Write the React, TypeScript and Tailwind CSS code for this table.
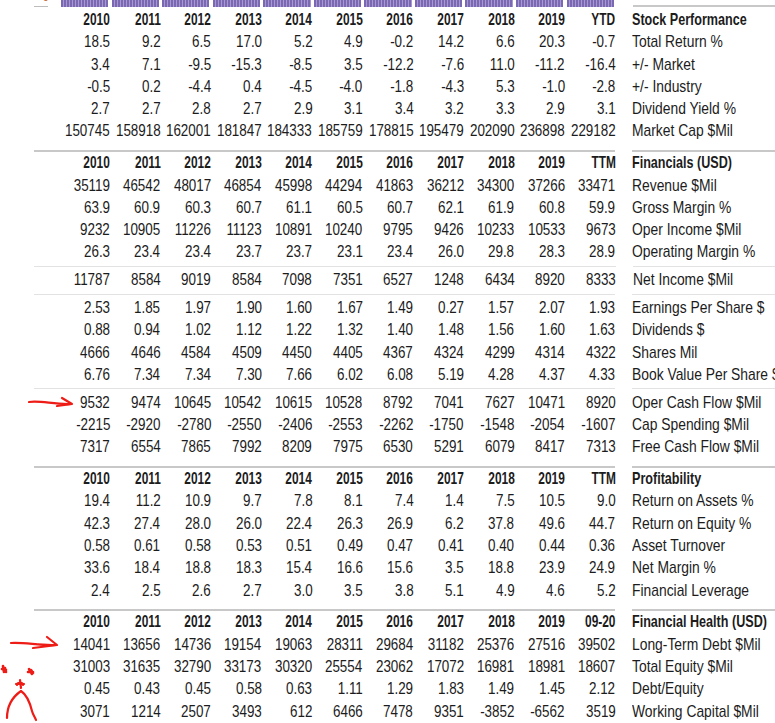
import React from "react";

type Group = { thick: boolean; header?: [string, string]; rows: [string, string[]][] };

const years = ["2010", "2011", "2012", "2013", "2014", "2015", "2016", "2017", "2018", "2019"];
const r = (s: string) => s.split(" ");

const groups: Group[] = [
  {
    thick: true,
    header: ["YTD", "Stock Performance"],
    rows: [
      ["Total Return %", r("18.5 9.2 6.5 17.0 5.2 4.9 -0.2 14.2 6.6 20.3 -0.7")],
      ["+/- Market", r("3.4 7.1 -9.5 -15.3 -8.5 3.5 -12.2 -7.6 11.0 -11.2 -16.4")],
      ["+/- Industry", r("-0.5 0.2 -4.4 0.4 -4.5 -4.0 -1.8 -4.3 5.3 -1.0 -2.8")],
      ["Dividend Yield %", r("2.7 2.7 2.8 2.7 2.9 3.1 3.4 3.2 3.3 2.9 3.1")],
      ["Market Cap $Mil", r("150745 158918 162001 181847 184333 185759 178815 195479 202090 236898 229182")],
    ],
  },
  {
    thick: true,
    header: ["TTM", "Financials (USD)"],
    rows: [
      ["Revenue $Mil", r("35119 46542 48017 46854 45998 44294 41863 36212 34300 37266 33471")],
      ["Gross Margin %", r("63.9 60.9 60.3 60.7 61.1 60.5 60.7 62.1 61.9 60.8 59.9")],
      ["Oper Income $Mil", r("9232 10905 11226 11123 10891 10240 9795 9426 10233 10533 9673")],
      ["Operating Margin %", r("26.3 23.4 23.4 23.7 23.7 23.1 23.4 26.0 29.8 28.3 28.9")],
    ],
  },
  {
    thick: false,
    rows: [["Net Income $Mil", r("11787 8584 9019 8584 7098 7351 6527 1248 6434 8920 8333")]],
  },
  {
    thick: false,
    rows: [
      ["Earnings Per Share $", r("2.53 1.85 1.97 1.90 1.60 1.67 1.49 0.27 1.57 2.07 1.93")],
      ["Dividends $", r("0.88 0.94 1.02 1.12 1.22 1.32 1.40 1.48 1.56 1.60 1.63")],
      ["Shares Mil", r("4666 4646 4584 4509 4450 4405 4367 4324 4299 4314 4322")],
      ["Book Value Per Share $", r("6.76 7.34 7.34 7.30 7.66 6.02 6.08 5.19 4.28 4.37 4.33")],
    ],
  },
  {
    thick: false,
    rows: [
      ["Oper Cash Flow $Mil", r("9532 9474 10645 10542 10615 10528 8792 7041 7627 10471 8920")],
      ["Cap Spending $Mil", r("-2215 -2920 -2780 -2550 -2406 -2553 -2262 -1750 -1548 -2054 -1607")],
      ["Free Cash Flow $Mil", r("7317 6554 7865 7992 8209 7975 6530 5291 6079 8417 7313")],
    ],
  },
  {
    thick: true,
    header: ["TTM", "Profitability"],
    rows: [
      ["Return on Assets %", r("19.4 11.2 10.9 9.7 7.8 8.1 7.4 1.4 7.5 10.5 9.0")],
      ["Return on Equity %", r("42.3 27.4 28.0 26.0 22.4 26.3 26.9 6.2 37.8 49.6 44.7")],
      ["Asset Turnover", r("0.58 0.61 0.58 0.53 0.51 0.49 0.47 0.41 0.40 0.44 0.36")],
      ["Net Margin %", r("33.6 18.4 18.8 18.3 15.4 16.6 15.6 3.5 18.8 23.9 24.9")],
      ["Financial Leverage", r("2.4 2.5 2.6 2.7 3.0 3.5 3.8 5.1 4.9 4.6 5.2")],
    ],
  },
  {
    thick: true,
    header: ["09-20", "Financial Health (USD)"],
    rows: [
      ["Long-Term Debt $Mil", r("14041 13656 14736 19154 19063 28311 29684 31182 25376 27516 39502")],
      ["Total Equity $Mil", r("31003 31635 32790 33173 30320 25554 23062 17072 16981 18981 18607")],
      ["Debt/Equity", r("0.45 0.43 0.45 0.58 0.63 1.11 1.29 1.83 1.49 1.45 2.12")],
      ["Working Capital $Mil", r("3071 1214 2507 3493 612 6466 7478 9351 -3852 -6562 3519")],
    ],
  },
];

// the source font is a condensed grotesk; squeeze Liberation Sans to match
const NumRow = ({ cells, bold }: { cells: string[]; bold?: boolean }) => (
  <div className="grid h-[22.3px] grid-cols-[repeat(11,50.55px)] leading-[22.3px]">
    {cells.map((c, i) => (
      <div key={i} className="flex justify-end">
        {bold ? (
          <span className="inline-block origin-right scale-x-[0.7] font-bold">{c}</span>
        ) : (
          <span className="inline-block origin-right scale-x-[0.79]">{c}</span>
        )}
      </div>
    ))}
  </div>
);

const Label = ({ text, bold }: { text: string; bold?: boolean }) => (
  <div className="h-[22.3px] leading-[22.3px]">
    {bold ? (
      <span className="inline-block origin-left scale-x-[0.74] font-bold">{text}</span>
    ) : (
      <span className="inline-block origin-left scale-x-[0.815]">{text}</span>
    )}
  </div>
);

const Annotations = () => (
  <svg className="pointer-events-none absolute left-0 top-0" width="775" height="723" fill="none" stroke="#ee1c16" strokeWidth="2.2" strokeLinecap="round" strokeLinejoin="round">
    {/* arrow at oper cash flow */}
    <path d="M29 402 C40 400 55 405 71 404" />
    <path d="M62 398 L72 404 L57 406" />
    {/* arrow at long-term debt */}
    <path d="M11 643 C25 642 40 646 56 645" />
    <path d="M47 637 L57 645 L33 648" />
    {/* sad face */}
    <path d="M3 666 L4 672 M2 669 L6 670 M5 668 L6 672" strokeWidth="2.6" />
    <path d="M29 669 L32 674 M28 672 L33 672 M31 670 L33 673" strokeWidth="2.6" />
    <path d="M20 680 L21 688 M16 684 L24 684" />
    <path d="M17 685 C17 682 23 682 23 685" />
    <path d="M7 718 C7 708 11 698 21 691 C27 695 30 703 32 711 C33 715 35 717 36 720" />
  </svg>
);

export default function App() {
  return (
    <div className="relative h-[723px] w-[775px] overflow-hidden whitespace-nowrap bg-white font-['Liberation_Sans',Arial,sans-serif] text-[17px] text-[#1c1c1c]">
      {/* top strip */}
      <div className="flex h-[9px]">
        <div className="relative ml-[34px] w-[582px] pl-[25.45px]">
          <div className="absolute left-[9px] top-[-7px] text-[10px] leading-[10px] text-[#c0601a]">0</div>
          <div className="absolute left-0 top-[6px] h-px w-[14px] bg-[#bdbdbd]"></div>
          <div className="grid grid-cols-[repeat(11,50.55px)]">
            {Array.from({ length: 11 }).map((_, i) => (
              <div key={i} className="mx-[1.6px] h-[7px] bg-[repeating-linear-gradient(90deg,#7a68b3_0_2px,#a898d2_2px_3px)]"></div>
            ))}
          </div>
        </div>
        <div className="ml-[17px] mt-[5px] h-[2px] flex-1 bg-[#c8c8c8]"></div>
      </div>

      {groups.map((g, gi) => (
        <div key={gi} className={`flex ${gi === 0 ? "" : g.thick ? "mt-[7.5px]" : "mt-[2px]"}`}>
          <div
            className={`ml-[34px] w-[582px] pl-[25.45px] ${
              gi === 0 ? "" : g.thick ? "border-t-2 border-[#c8c8c8]" : "border-t border-[#e2e2e2] pt-[2.5px]"
            }`}
          >
            {g.header && <NumRow bold cells={[...years, g.header[0]]} />}
            {g.rows.map(([label, cells]) => (
              <NumRow key={label} cells={cells} />
            ))}
          </div>
          <div
            className={`ml-[17px] flex-1 ${
              gi === 0 ? "" : g.thick ? "border-t-2 border-[#c8c8c8]" : "border-t border-[#e2e2e2] pt-[2.5px]"
            }`}
          >
            {g.header && <Label bold text={g.header[1]} />}
            {g.rows.map(([label]) => (
              <Label key={label} text={label} />
            ))}
          </div>
        </div>
      ))}

      <Annotations />
    </div>
  );
}
